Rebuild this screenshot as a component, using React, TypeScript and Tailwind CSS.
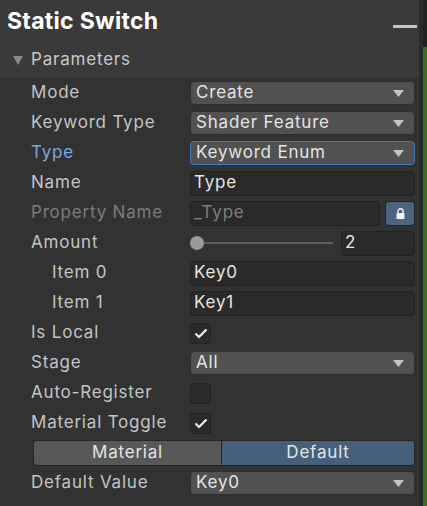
import React from "react";

const Arrow = () => (
  <svg width="11" height="7" viewBox="0 0 11 7" className="shrink-0">
    <path d="M0 0 L11 0 L5.5 7 Z" fill="#c4c4c4" />
  </svg>
);

const Dropdown = ({ value, focused }: { value: string; focused?: boolean }) => (
  <div
    className={`flex h-[24px] w-full items-center justify-between rounded-[4px] border bg-[#515151] pl-[5px] pr-[10px] text-[17px] tracking-[0.8px] text-[#e4e4e4] ${
      focused ? "border-[#3b79c4]" : "border-[#2e2e2e]"
    }`}
  >
    <span>{value}</span>
    <Arrow />
  </div>
);

const Field = ({ value, dim }: { value: string; dim?: boolean }) => (
  <div
    className={`flex h-[25px] w-full items-center rounded-[4px] border border-[#212121] bg-[#2a2a2a] px-[3px] text-[17px] tracking-[0.8px] ${
      dim ? "text-[#7c7c7c]" : "text-[#e4e4e4]"
    }`}
  >
    {value}
  </div>
);

const Check = ({ on }: { on?: boolean }) => (
  <div className="flex h-[21px] w-[21px] items-center justify-center rounded-[3px] border border-[#222] bg-[#2a2a2a]">
    {on && (
      <svg width="14" height="11" viewBox="0 0 14 11">
        <path d="M1.5 5.5 L5 9 L12.5 1.5" stroke="#f0f0f0" strokeWidth="2.2" fill="none" />
      </svg>
    )}
  </div>
);

const Row = ({
  label,
  labelClass = "text-[#c4c4c4]",
  indent,
  children,
}: {
  label: string;
  labelClass?: string;
  indent?: boolean;
  children: React.ReactNode;
}) => (
  <div className="flex h-[30px] items-center">
    <div className={`w-[190px] shrink-0 text-[17px] tracking-[0.8px] ${indent ? "pl-[52px]" : "pl-[31px]"} ${labelClass}`}>
      {label}
    </div>
    <div className="flex w-[225px] items-center">{children}</div>
  </div>
);

export default function App() {
  return (
    <div
      className="flex h-[506px] w-[427px] overflow-hidden bg-[#383838]"
      style={{ fontFamily: "Inter, 'Noto Sans', sans-serif" }}
    >
      <div className="flex w-[419px] flex-col">
        <div className="flex h-[42px] items-center justify-between bg-[#3a3a3a] pl-[7px] pr-[2px]">
          <span className="pt-[1px] text-[23px] font-bold tracking-[0.3px] text-white">Static Switch</span>
          <div className="mt-[10px] h-[3px] w-[24px] bg-[#c4c4c4]" />
        </div>
        <div className="flex h-[35px] items-center gap-[8px] bg-[#3a3a3a] pl-[13px] pt-[1px]">
          <svg width="10" height="9" viewBox="0 0 10 9">
            <path d="M0 0 L10 0 L5 9 Z" fill="#8a8a8a" />
          </svg>
          <span className="text-[17px] tracking-[0.8px] text-[#c8c8c8]">Parameters</span>
        </div>
        <div className="flex flex-1 flex-col bg-[#323232] pt-[1px]">
          <Row label="Mode">
            <Dropdown value="Create" />
          </Row>
          <Row label="Keyword Type">
            <Dropdown value="Shader Feature" />
          </Row>
          <Row label="Type" labelClass="text-[#7aa7e6]">
            <Dropdown value="Keyword Enum" focused />
          </Row>
          <Row label="Name">
            <Field value="Type" />
          </Row>
          <Row label="Property Name" labelClass="text-[#7c7c7c]">
            <div className="flex w-full items-center gap-[5px]">
              <Field value="_Type" dim />
              <div className="flex h-[25px] w-[30px] shrink-0 items-center justify-center rounded-[4px] border border-[#222] bg-[#4a6481]">
                <svg width="9" height="11" viewBox="0 0 9 11">
                  <path d="M2 5 V3.2 A2.5 2.5 0 0 1 7 3.2 V5" stroke="#f4f4f4" strokeWidth="1.4" fill="none" />
                  <rect x="0.5" y="5" width="8" height="6" rx="0.8" fill="#f4f4f4" />
                </svg>
              </div>
            </div>
          </Row>
          <Row label="Amount">
            <div className="flex w-full items-center">
              <div className="relative flex h-[14px] w-[151px] items-center">
                <div className="ml-[6px] h-[2px] w-[137px] bg-[#5e5e5e]" />
                <div className="absolute left-0 top-0 h-[14px] w-[14px] rounded-full bg-[#9a9a9a]" />
              </div>
              <div className="w-[74px]">
                <Field value="2" />
              </div>
            </div>
          </Row>
          <Row label="Item 0" indent>
            <Field value="Key0" />
          </Row>
          <Row label="Item 1" indent>
            <Field value="Key1" />
          </Row>
          <Row label="Is Local">
            <Check on />
          </Row>
          <Row label="Stage">
            <Dropdown value="All" />
          </Row>
          <Row label="Auto-Register">
            <Check />
          </Row>
          <Row label="Material Toggle">
            <Check on />
          </Row>
          <div className="flex h-[30px] items-center pl-[33px] pr-[4px]">
            <div className="flex h-[26px] w-full overflow-hidden rounded-[4px] border border-[#262626] text-[17px] tracking-[0.8px] text-[#e4e4e4]">
              <div className="flex w-[187px] items-center justify-center bg-[#585858]">Material</div>
              <div className="flex flex-1 items-center justify-center border-l border-[#222] bg-[#46607c]">Default</div>
            </div>
          </div>
          <Row label="Default Value">
            <Dropdown value="Key0" />
          </Row>
        </div>
      </div>
      <div className="w-[4px] bg-[#2b2b2b]" />
      <div className="flex w-[4px] flex-col">
        <div className="h-[47px] bg-[#222]" />
        <div className="flex-1 bg-[#3a6b28]" />
      </div>
    </div>
  );
}
